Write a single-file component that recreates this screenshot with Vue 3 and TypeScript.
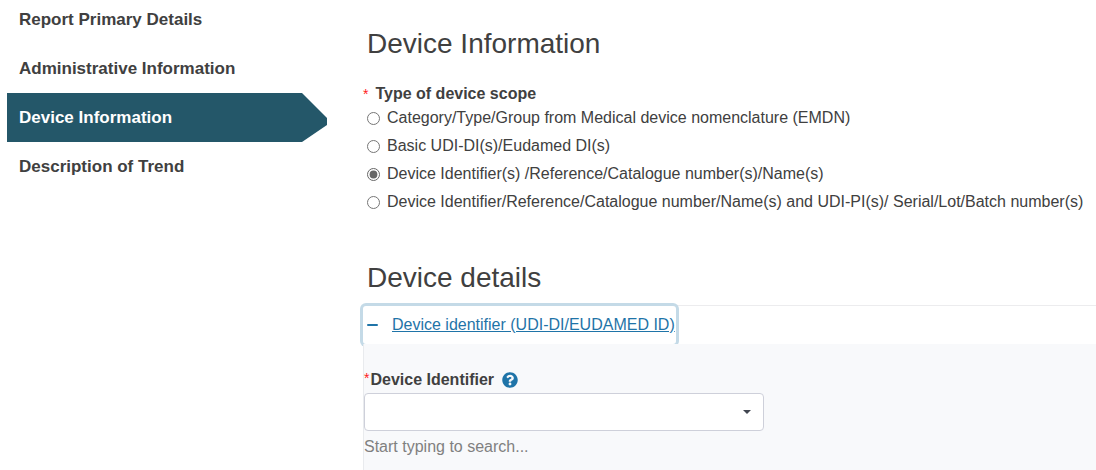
<script setup lang="ts">
import { ref } from 'vue'

interface Step {
  id: string
  label: string
}

const steps: Step[] = [
  { id: 'report', label: 'Report Primary Details' },
  { id: 'admin', label: 'Administrative Information' },
  { id: 'device', label: 'Device Information' },
  { id: 'trend', label: 'Description of Trend' },
]
const activeStep = ref('device')

const scopes: Step[] = [
  { id: 'category', label: 'Category/Type/Group from Medical device nomenclature (EMDN)' },
  { id: 'basic', label: 'Basic UDI-DI(s)/Eudamed DI(s)' },
  { id: 'identifier', label: 'Device Identifier(s) /Reference/Catalogue number(s)/Name(s)' },
  { id: 'production', label: 'Device Identifier/Reference/Catalogue number/Name(s) and UDI-PI(s)/ Serial/Lot/Batch number(s)' },
]
const scope = ref('identifier')
const expanded = ref(true)
const identifier = ref('')
</script>

<template>
  <div class="page">
    <nav class="steps" aria-label="Report steps">
      <a
        v-for="step in steps"
        :key="step.id"
        :href="'#' + step.id"
        class="step"
        :class="{ active: step.id === activeStep }"
        @click.prevent="activeStep = step.id"
      >{{ step.label }}</a>
    </nav>

    <main class="content">
      <h2 class="title">Device Information</h2>
      <fieldset class="scope">
        <legend class="legend"><span class="required">*</span>Type of device scope</legend>
        <label v-for="item in scopes" :key="item.id" class="option">
          <input v-model="scope" type="radio" name="scope" :value="item.id" />
          <span>{{ item.label }}</span>
        </label>
      </fieldset>

      <h2 class="title">Device details</h2>
      <section class="accordion">
        <button class="toggle" type="button" :aria-expanded="expanded" @click="expanded = !expanded">
          <svg class="minus" viewBox="0 0 12 12" aria-hidden="true">
            <rect x="0" y="5" width="11" height="2" rx="1" />
          </svg>
          <span class="toggle-text">Device identifier (UDI-DI/EUDAMED ID)</span>
        </button>
        <div v-if="expanded" class="panel">
          <div class="field-head">
            <label for="identifier" class="field-label"><span class="required">*</span>Device Identifier</label>
            <button class="help" type="button" aria-label="Help">
              <svg viewBox="0 0 512 512" aria-hidden="true">
                <path d="M504 256c0 137-111 248-248 248S8 393 8 256 119 8 256 8s248 111 248 248zM262.700 90c-54.500 0-89.300 23-116.500 63.800-3.500 5.300-2.400 12.400 2.700 16.300l34.700 26.300c5.200 3.900 12.600 3 16.700-2.100 17.900-22.700 30.100-35.800 57.300-35.800 20.400 0 45.700 13.100 45.700 33 0 15-12.400 22.700-32.500 34C247.100 238.500 216 254.900 216 296v4c0 6.600 5.400 12 12 12h56c6.600 0 12-5.400 12-12v-1.300c0-28.500 83.200-29.600 83.200-106.700 0-58-60.200-102-116.500-102zM256 338c-25.400 0-46 20.600-46 46s20.600 46 46 46 46-20.600 46-46-20.600-46-46-46z" />
              </svg>
            </button>
          </div>
          <div class="select-wrap">
            <select id="identifier" v-model="identifier" class="select" aria-describedby="identifier-hint">
              <option value=""></option>
            </select>
            <svg class="caret" viewBox="0 0 8 4" aria-hidden="true"><path d="M0 0h8L4 4z" /></svg>
          </div>
          <p id="identifier-hint" class="hint">Start typing to search...</p>
        </div>
      </section>
    </main>
  </div>
</template>

<style>
body {
  background: #fff;
}
</style>

<style scoped>
.page {
  display: grid;
  grid-template-columns: 320px minmax(0, 1fr);
  column-gap: 36px;
  padding-left: 7px;
  min-height: 100vh;
  overflow: hidden;
  box-sizing: border-box;
  color: #404040;
  font-family: "Liberation Sans", Arial, sans-serif;
  font-size: 16px;
  line-height: 24px;
}
.steps {
  display: flex;
  flex-direction: column;
  margin-top: -5px;
}
.step {
  padding: 13px 12px 12px;
  color: #404040;
  font-size: 17px;
  font-weight: 700;
  text-decoration: none;
}
.step.active {
  background: #245769;
  color: #fff;
  clip-path: polygon(0 0, 295px 0, 100% 25px, 100% 32px, 295px 100%, 0 100%);
}
.content {
  display: flex;
  flex-direction: column;
  padding-top: 27px;
}
.title {
  margin: 0;
  padding-left: 4px;
  font-size: 28px;
  font-weight: 400;
  line-height: 34px;
}
.scope {
  min-width: 0;
  margin: 23px 0 45px;
  padding: 0;
  border: 0;
}
.legend {
  display: flex;
  gap: 7px;
  padding: 0;
  font-weight: 700;
  line-height: 20px;
}
.required {
  color: #ff2020;
  font-size: 14px;
  font-weight: 400;
  line-height: 20px;
}
.option {
  display: flex;
  align-items: center;
  gap: 7px;
  height: 28px;
  padding-left: 4px;
  white-space: nowrap;
}
.option input {
  width: 13px;
  height: 13px;
  margin: 0;
  accent-color: #666;
}
.accordion {
  margin-top: 10px;
  border-top: 1px solid #ececee;
  flex: 1;
  display: flex;
  flex-direction: column;
}
.toggle {
  align-self: flex-start;
  display: flex;
  align-items: center;
  gap: 13px;
  height: 38px;
  padding: 0 1px 0 4px;
  border: 0;
  border-radius: 3px;
  background: #fff;
  box-shadow: 0 0 0 3px #c4dae7;
  color: #1f74a8;
  font: inherit;
}
.toggle-text {
  text-decoration: underline;
}
.minus {
  width: 12px;
  height: 12px;
  fill: #1f74a8;
}
.panel {
  position: relative;
  flex: 1;
  padding: 24px 0 10px;
  border-left: 1px solid #e9ebee;
  background: #f8f9fb;
}
.field-head {
  display: flex;
  align-items: center;
  gap: 8px;
}
.field-label {
  display: flex;
  gap: 1px;
  font-weight: 700;
}
.help {
  display: flex;
  padding: 0;
  border: 0;
  background: none;
}
.help svg {
  width: 16px;
  height: 16px;
  fill: #1f74a8;
}
.select-wrap {
  position: relative;
  max-width: 400px;
  margin-top: 1px;
}
.select {
  display: block;
  width: 100%;
  height: 38px;
  padding: 0 32px 0 12px;
  border: 1px solid #ced0da;
  border-radius: 4px;
  appearance: none;
  background: #fff;
  color: inherit;
  font: inherit;
}
.caret {
  position: absolute;
  top: 17px;
  right: 13px;
  width: 8px;
  height: 4px;
  fill: #414650;
  pointer-events: none;
}
.hint {
  margin: 4px 0 0;
  color: #808080;
}
</style>
